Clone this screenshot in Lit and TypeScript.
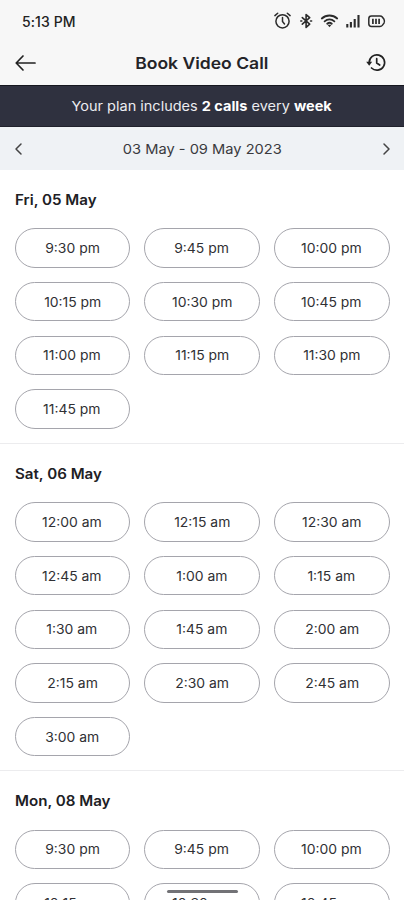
import { LitElement, html, css, svg } from "lit";
import { customElement, property } from "lit/decorators.js";

interface Day {
  label: string;
  slots: string[];
}

const days: Day[] = [
  {
    label: "Fri, 05 May",
    slots: ["9:30 pm", "9:45 pm", "10:00 pm", "10:15 pm", "10:30 pm", "10:45 pm", "11:00 pm", "11:15 pm", "11:30 pm", "11:45 pm"],
  },
  {
    label: "Sat, 06 May",
    slots: ["12:00 am", "12:15 am", "12:30 am", "12:45 am", "1:00 am", "1:15 am", "1:30 am", "1:45 am", "2:00 am", "2:15 am", "2:30 am", "2:45 am", "3:00 am"],
  },
  {
    label: "Mon, 08 May",
    slots: ["9:30 pm", "9:45 pm", "10:00 pm", "10:15 pm", "10:30 pm", "10:45 pm"],
  },
];

@customElement("status-bar")
class StatusBar extends LitElement {
  static styles = css`
    :host {
      display: flex;
      height: 42px;
      box-sizing: border-box;
      padding: 0 18px 0 22px;
      align-items: center;
      justify-content: space-between;
      color: #222;
    }
    .time {
      font-size: 14px;
      font-weight: 500;
      letter-spacing: 0.1px;
    }
    .icons {
      display: block;
      fill: none;
      stroke: #2b2b2b;
      stroke-linecap: round;
      stroke-linejoin: round;
    }
    .solid {
      fill: #2b2b2b;
      stroke: none;
    }
  `;
  render() {
    return html`
      <span class="time">5:13 PM</span>
      <svg class="icons" width="113" height="20" viewBox="273 11 113 20">
        ${svg`
          <g stroke-width="1.5">
            <circle cx="282.5" cy="21.3" r="6.6"/>
            <path d="M282.5 17.6v4l2 2.4M274.9 15.6l2.8-2.4M290.1 15.6l-2.8-2.4"/>
          </g>
          <path stroke-width="1.6" d="M302.3 17.6l7.4 6.6-3.6 3.2V14.6l3.6 3.1-7.4 6.5M300.8 21h1M310.6 21h1"/>
          <g stroke-width="1.8">
            <path d="M321.800 18.500c4.400-4 11-4 15.400 0"/>
            <path d="M324.600 21.300c2.800-2.500 7-2.500 9.800 0"/>
            <path d="M327.200 23.700c1.400-1.200 3.200-1.200 4.600 0"/>
          </g>
          <path class="solid" d="M327.500 24.800h4l-2 2.400z"/>
          <path stroke-width="2.1" stroke-linecap="butt" d="M347.300 27.500v-3.500M350.900 27.500v-5.500M354.700 27.500v-8.500M358.500 27.500V15"/>
          <path stroke-width="1.5" d="M371.500 16h8.500q1.500 0 2.300 1l1.700 2.300q1 1.900 0 3.800l-1.700 2.300q-.8 1-2.300 1h-8.500q-2.700 0-2.700-2.700v-5q0-2.700 2.700-2.700z"/>
          <path stroke-width="1.7" stroke-linecap="butt" d="M372.900 18.700v5.200M376 18.700v5.200M379.100 18.700v5.200"/>
        `}
      </svg>
    `;
  }
}

@customElement("day-section")
class DaySection extends LitElement {
  @property({ attribute: false }) day!: Day;
  static styles = css`
    :host {
      display: block;
      box-sizing: border-box;
      padding: 20px 14.5px 14.1px 14.5px;
      border-bottom: 1px solid #ececee;
    }
    .label {
      height: 20px;
      margin-bottom: 18.3px;
      line-height: 20px;
      font-size: 14px;
      font-weight: 600;
      color: #202024;
    }
    .stretch {
      display: inline-block;
      transform: scaleX(1.08);
      transform-origin: left;
    }
    .grid {
      display: grid;
      grid-template-columns: repeat(3, 115.5px);
      justify-content: space-between;
      gap: 14.3px 0;
    }
    .slot {
      height: 39.4px;
      box-sizing: border-box;
      display: flex;
      align-items: center;
      justify-content: center;
      margin: 0;
      padding: 0;
      border: 1px solid #a5a5ac;
      border-radius: 20px;
      background: #fff;
      font: 400 13px Inter, "Open Sans", sans-serif;
      color: #303034;
    }
    .slot span {
      transform: scaleX(1.07);
    }
  `;
  render() {
    return html`
      <div class="label"><span class="stretch">${this.day.label}</span></div>
      <div class="grid">
        ${this.day.slots.map((s) => html`<button class="slot"><span>${s}</span></button>`)}
      </div>
    `;
  }
}

@customElement("app-root")
class AppRoot extends LitElement {
  static styles = css`
    :host {
      display: block;
      position: relative;
      height: 900px;
      overflow: hidden;
      background: #fff;
      font-family: Inter, "Open Sans", sans-serif;
    }
    .top {
      height: 85px;
      background: #f7f7f7;
    }
    .nav {
      height: 42px;
      padding: 0 17px 0 15px;
      display: flex;
      align-items: center;
      justify-content: space-between;
    }
    .title {
      font-size: 16px;
      font-weight: 600;
      color: #242428;
      transform: scaleX(1.095);
    }
    .icon {
      display: block;
      fill: none;
      stroke: #222;
      stroke-width: 1.7;
      stroke-linecap: round;
      stroke-linejoin: round;
    }
    .head {
      fill: #222;
      stroke: none;
    }
    .banner {
      height: 42px;
      box-sizing: border-box;
      border-top: 1px solid #16171f;
      border-bottom: 1px solid #20212c;
      background: #2f313f;
      display: flex;
      align-items: center;
      justify-content: center;
      color: #ececf0;
      font-size: 13px;
    }
    .banner b {
      font-weight: 700;
      color: #fff;
    }
    .banner span {
      white-space: nowrap;
      transform: scaleX(1.115);
    }
    .week {
      height: 43px;
      padding: 0 12px;
      background: #eff2f5;
      display: flex;
      align-items: center;
      justify-content: space-between;
      font-size: 13.5px;
      color: #3a3a3e;
    }
    .week span {
      transform: scaleX(1.085);
    }
    .chevron {
      stroke: #444;
      stroke-width: 1.5;
    }
    .handle {
      position: absolute;
      left: 167px;
      bottom: 7px;
      width: 71px;
      height: 3px;
      border-radius: 2px;
      background: #727276;
    }
  `;
  render() {
    return html`
      <div class="top">
        <status-bar></status-bar>
        <div class="nav">
          <svg class="icon" width="22" height="18" viewBox="0 0 22 18">
            <path d="M20 9H1.500M8 2L1.200 9l6.800 7" />
          </svg>
          <span class="title">Book Video Call</span>
          <svg class="icon" width="21" height="20" viewBox="366 53 21 20">
            <path d="M369.200 62.500a7.700 7.700 0 1 1 2.300 5.500M376.700 58.700v4.300l3 2" />
            <path class="head" d="M366.200 61.800h6l-3 3.900z" />
          </svg>
        </div>
      </div>
      <div class="banner"><span>Your plan includes <b>2 calls</b> every <b>week</b></span></div>
      <div class="week">
        <svg class="icon chevron" width="12" height="14" viewBox="0 0 12 14"><path d="M9 2L4 7l5 5" /></svg>
        <span>03 May - 09 May 2023</span>
        <svg class="icon chevron" width="12" height="14" viewBox="0 0 12 14"><path d="M4 2l5 5-5 5" /></svg>
      </div>
      ${days.map((d) => html`<day-section .day=${d}></day-section>`)}
      <div class="handle"></div>
    `;
  }
}
